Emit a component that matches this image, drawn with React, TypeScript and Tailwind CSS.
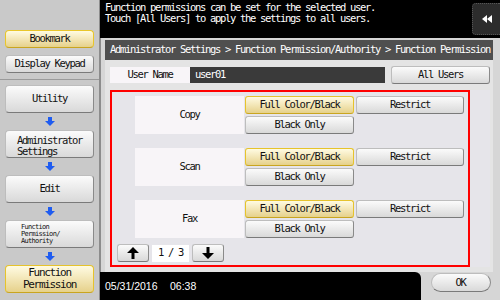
import React from "react";

const btn =
  "flex items-center justify-center rounded-[3px] border border-[#bdbdbd] border-b-[#7a7a7a] border-r-[#8a8a8a] bg-gradient-to-b from-[#fbfbfb] to-[#d9d9d9] text-[#111]";
const btnSel =
  "flex items-center justify-center rounded-[3px] border border-[#e6c32c] border-b-[#c9a520] bg-gradient-to-b from-[#fffbe2] to-[#e6d18a] text-[#111]";

function BlueArrow() {
  return (
    <div className="flex h-[17px] items-center justify-center">
      <svg width="10" height="9" viewBox="0 0 10 9">
        <rect x="3" y="0" width="4" height="4" fill="#1f5cf0" />
        <polygon points="0,4 10,4 5,9" fill="#1f5cf0" />
      </svg>
    </div>
  );
}

function Row({ label }: { label: string }) {
  return (
    <div className="flex h-[38px]">
      <div className="flex w-[109px] items-center justify-center bg-[#f8f5f8]">{label}</div>
      <div className="ml-[1px] flex w-[109px] flex-col gap-[2px]">
        <div className={btnSel + " h-[18px]"}>Full Color/Black</div>
        <div className={btn + " h-[18px]"}>Black Only</div>
      </div>
      <div className={btn + " ml-[2px] h-[18px] w-[108px]"}>Restrict</div>
    </div>
  );
}

function Arrow({ up }: { up: boolean }) {
  return (
    <svg width="12" height="12" viewBox="0 0 12 12" className={up ? "" : "rotate-180"}>
      <polygon points="6,0 12,6 7.5,6 7.5,12 4.5,12 4.5,6 0,6" fill="#000" />
    </svg>
  );
}

export default function App() {
  return (
    <div className="flex h-[300px] w-[500px] overflow-hidden font-['DejaVu_Sans_Mono',monospace] text-[10.5px] tracking-[-1.32px] text-[#111]">
      {/* Sidebar */}
      <aside className="flex w-[100px] shrink-0 flex-col border-r border-[#8c8c8c] bg-[#c9c9c9]">
        <div className="flex h-[80px] flex-col gap-[7px] border-b border-[#9a9a9a] px-[5px] pt-[30px]">
          <div className={btnSel + " h-[18px] rounded-[4px] border-[#e9c62a]"}>Bookmark</div>
          <div className={btn + " h-[18px] rounded-[4px]"}>Display Keypad</div>
        </div>
        <div className="flex flex-col px-[5px] pt-[5px]">
          <div className={btn + " h-[28px] rounded-[4px]"}>Utility</div>
          <BlueArrow />
          <div className={btn + " h-[28px] rounded-[4px]"}>
            <div className="flex flex-col items-start pt-[3px] leading-[11px]">
              <span>Administrator</span>
              <span>Settings</span>
            </div>
          </div>
          <BlueArrow />
          <div className={btn + " h-[28px] rounded-[4px]"}>Edit</div>
          <BlueArrow />
          <div className={btn + " h-[28px] flex-col items-start rounded-[4px] pl-[15px] text-[7px] leading-[7px] tracking-[-0.7px]"}>
            <span>Function</span>
            <span>Permission/</span>
            <span>Authority</span>
          </div>
          <BlueArrow />
          <div className={btnSel + " h-[28px] flex-col rounded-[4px] text-[11px] leading-[12px]"}>
            <span>Function</span>
            <span>Permission</span>
          </div>
        </div>
      </aside>

      {/* Main */}
      <div className="flex flex-1 flex-col">
        {/* top message */}
        <div className="flex h-[38px] bg-black">
          <div className="flex-1 pl-[5px] pt-[2px] leading-[11px] text-white">
            <div>Function permissions can be set for the selected user.</div>
            <div>Touch [All Users] to apply the settings to all users.</div>
          </div>
          <div className="mt-[3px] flex h-[32px] w-[28px] items-center justify-center rounded-l-[4px] border border-r-0 border-dotted border-[#555] bg-[#2c2c2c]">
            <svg width="10" height="8" viewBox="0 0 10 8">
              <polygon points="5,0 5,8 0,4" fill="#fff" />
              <polygon points="10,0 10,8 5,4" fill="#fff" />
            </svg>
          </div>
        </div>

        {/* panel */}
        <div className="flex flex-1 flex-col border-l border-[#8c8c8c] bg-[#d6d6d6] pl-[4px] pr-[7px] pt-[2px]">
          <div className="flex h-[20px] items-center bg-[#4f4f4f] pl-[5px] text-white">
            Administrator Settings &gt; Function Permission/Authority &gt; Function Permission
          </div>
          <div className="flex flex-1 flex-col bg-[#e4e4e4] pl-[5px] pr-[3px] pt-[6px]">
            <div className="flex h-[18px] items-center">
              <div className="flex h-[16px] w-[80px] items-center justify-center bg-[#f8f5f8]">User Name</div>
              <div className="flex h-[16px] w-[195px] items-center bg-[#3a3a3a] pl-[5px] text-white">user01</div>
              <div className={btn + " ml-[6px] h-[18px] flex-1"}>All Users</div>
            </div>
            <div className="mb-[5px] mt-[6px] flex flex-1 bg-[#e6e5ea]">
              <div className="relative flex w-[360px] flex-col border-2 border-[#ff0000] pb-[3px] pl-[5px] pt-[4px]">
                <div className="flex flex-col gap-[14px] pl-[18px]">
                  <Row label="Copy" />
                  <Row label="Scan" />
                  <Row label="Fax" />
                </div>
                <div className="mt-auto flex h-[18px] items-center">
                  <div className={btn + " h-[18px] w-[32px]"}>
                    <Arrow up />
                  </div>
                  <div className="ml-[3px] flex h-[17px] w-[37px] items-center justify-center bg-white">1 / 3</div>
                  <div className={btn + " ml-[3px] h-[18px] w-[32px]"}>
                    <Arrow up={false} />
                  </div>
                </div>
              </div>
            </div>
          </div>
        </div>

        {/* bottom */}
        <div className="flex h-[28px] bg-[#d6d6d6]">
          <div className="flex flex-1 items-center rounded-tr-[6px] bg-black pl-[5px] pt-[2px] font-['Liberation_Sans',sans-serif] text-[10.5px] tracking-normal text-white">
            <span className="w-[65px]">05/31/2016</span>
            <span>06:38</span>
          </div>
          <div className="flex w-[79px] items-start justify-center pt-[1px]">
            <div className={btn + " h-[19px] w-[60px] rounded-full"}>OK</div>
          </div>
        </div>
      </div>
    </div>
  );
}
